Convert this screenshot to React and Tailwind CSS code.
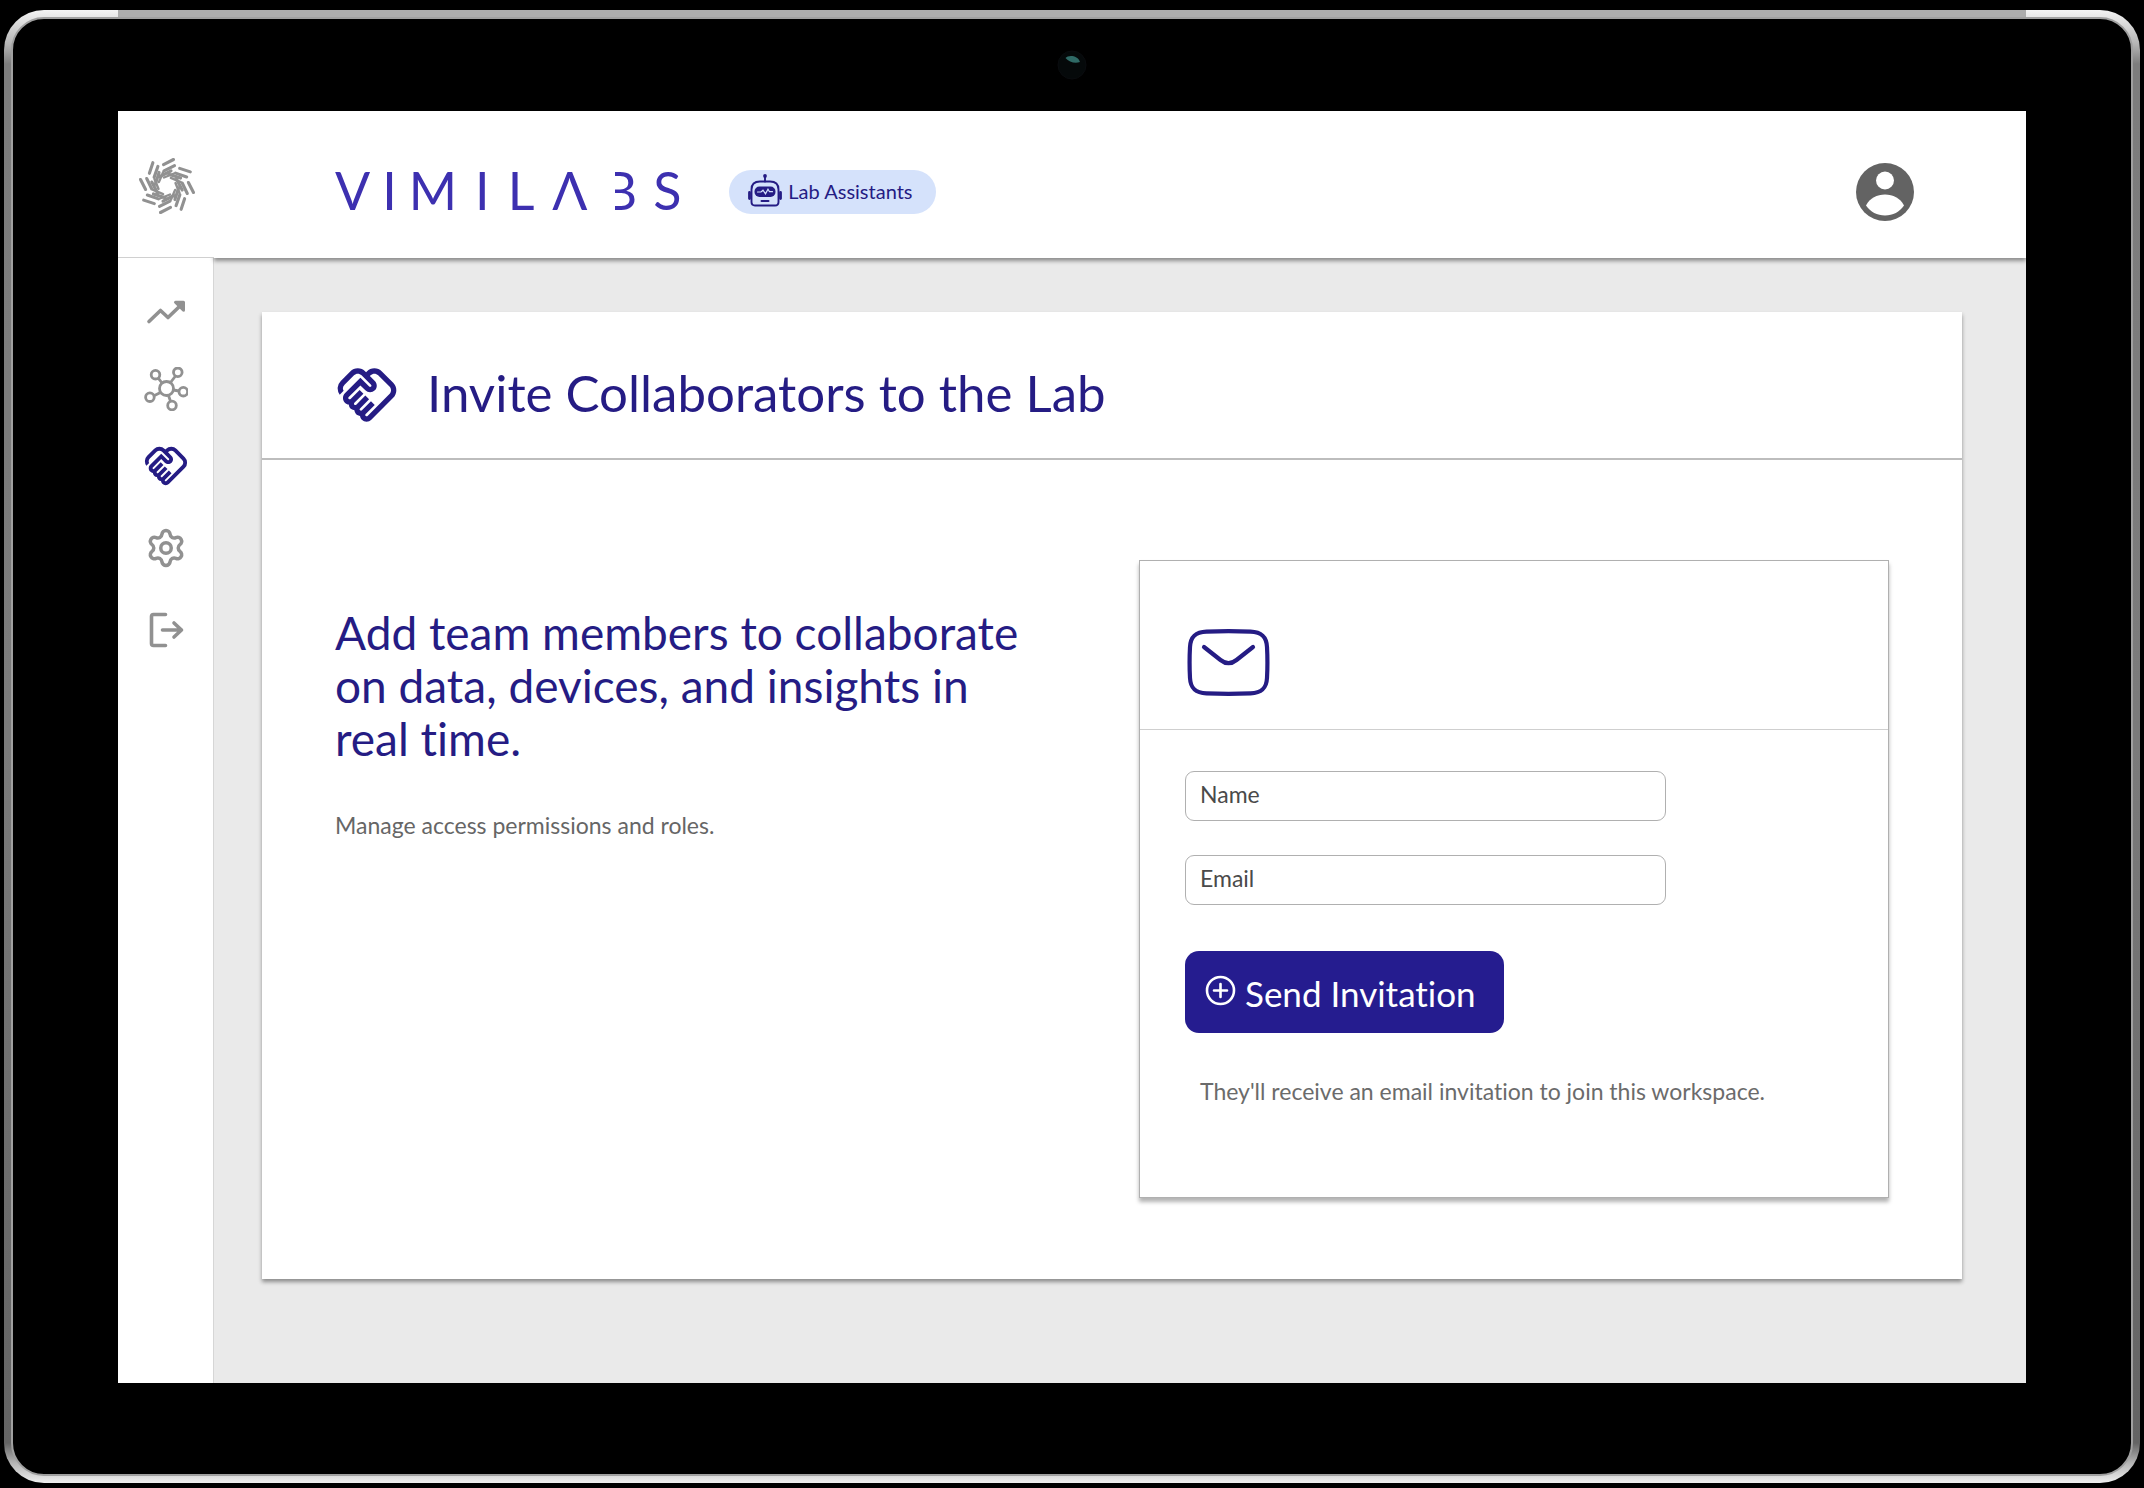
import React from "react";
import { MdOutlineHandshake } from "react-icons/md";
import { Settings } from "lucide-react";

function BurstLogo() {
  return (
    <svg viewBox="-30 -30 60 60" className="size-[60px]" fill="none" stroke="#919191" strokeWidth="3.1" strokeLinecap="round" aria-hidden="true">
      {[0, 45, 90, 135, 180, 225, 270, 315].map((a) => (
        <g key={a} transform={`rotate(${a})`}>
          <path d="M-3.500 -21.400L6.500 -26.500" />
          <path d="M-3 -15.200L7.500 -20.300" />
          <path d="M-7 -9.500L4 -15.200" />
          <path d="M-3 -8.500L7 -12.500" strokeWidth="2.400" />
        </g>
      ))}
    </svg>
  );
}

function TrendIcon() {
  return (
    <svg viewBox="0 0 44 44" className="size-11" fill="none" stroke="#919191" strokeWidth="3.6" strokeLinecap="round" strokeLinejoin="round" aria-hidden="true">
      <path d="M5 31.5L16.500 20.5L24 27.5L36.500 15.5" />
      <path d="M31.500 12.2H39.500V20.3Z" fill="#919191" strokeWidth="3" />
    </svg>
  );
}

function HubIcon() {
  return (
    <svg viewBox="0 0 44 44" className="size-11" fill="none" stroke="#919191" strokeWidth="2.8" aria-hidden="true">
      <circle cx="22.500" cy="21.500" r="7" />
      <circle cx="11.500" cy="7.700" r="4.300" />
      <circle cx="33.800" cy="5.300" r="4.300" />
      <circle cx="39.300" cy="24.700" r="4.300" />
      <circle cx="28" cy="38.500" r="4.300" />
      <circle cx="5.900" cy="30.200" r="4.300" />
      <path d="M14.300 11.200L18 16M31.500 9L26.500 15.500M29.500 23L35 24M24.500 28.500L26.500 34.300M10 28.800L16 25.800" />
    </svg>
  );
}

function LogoutIcon() {
  return (
    <svg viewBox="0 0 44 44" className="size-11" fill="none" stroke="#919191" strokeWidth="3.6" strokeLinecap="round" strokeLinejoin="round" aria-hidden="true">
      <path d="M21.500 6.500H9.500C8.200 6.500 7.500 7.200 7.500 8.500V35.500C7.500 36.800 8.200 37.500 9.500 37.500H21.500" />
      <path d="M18.500 22H37.500M30 15L37.500 22L30 29" />
    </svg>
  );
}

function RobotIcon() {
  return (
    <svg viewBox="0 0 34 34" className="size-[34px]" fill="none" stroke="#251c84" strokeWidth="1.9" strokeLinecap="round" aria-hidden="true">
      <circle cx="17" cy="2" r="1.900" fill="#251c84" stroke="none" />
      <path d="M17 2V7.500" />
      <path d="M12 7.500H22C27.500 7.500 30.500 10.500 30.500 15.500V28C30.500 30.500 29.500 31.500 27 31.500H7C4.500 31.500 3.500 30.500 3.500 28V15.500C3.500 10.500 6.500 7.500 12 7.500Z" />
      <path d="M1.500 18.500V24.500M32.500 18.500V24.500" strokeWidth="2.800" />
      <rect x="6.500" y="12.500" width="21" height="10.500" rx="5" fill="#251c84" stroke="none" />
      <path d="M9.500 18H13L15 16.200L17.500 19.800L20 15.300L21.500 17.700H24.500" stroke="#d5e2fb" strokeWidth="1.200" />
      <path d="M13.500 27H20.500" strokeWidth="2" />
    </svg>
  );
}

function AvatarIcon() {
  return (
    <svg viewBox="0 0 58 58" className="size-[58px]" aria-hidden="true">
      <circle cx="29" cy="29" r="29" fill="#636363" />
      <circle cx="29" cy="17.500" r="9" fill="#fff" />
      <path d="M10 42.500C14 35 21 31.500 29 31.500S44 35 48 42.500C43.500 49 37 52.500 29 52.500S14.500 49 10 42.500Z" fill="#fff" />
    </svg>
  );
}

function EnvelopeIcon() {
  return (
    <svg viewBox="0 0 88 67" className="h-[67px] w-[88px]" fill="none" stroke="#251c84" strokeWidth="4.2" strokeLinecap="round" aria-hidden="true">
      <path d="M21.500 2.600C36 2 51 2 65.500 2.600C77 3 81.500 8 82 18C82.600 29 82.600 38 82 49C81.500 59 77 64 65.500 64.400C51 65 36 65 21.500 64.400C10 64 5.500 59 5 49C4.400 38 4.400 29 5 18C5.500 8 10 3 21.500 2.600Z" />
      <path d="M19 18L35.500 31C41 35.400 46 35.400 51.500 31L68 18" />
    </svg>
  );
}

function PlusCircleIcon() {
  return (
    <svg viewBox="0 0 32 32" className="mb-1 size-8" fill="none" stroke="#fff" strokeWidth="2.600" strokeLinecap="round" aria-hidden="true">
      <circle cx="15.500" cy="15.500" r="13.500" />
      <path d="M15.500 9V22M9 15.500H22" />
    </svg>
  );
}

function Wordmark() {
  return (
    <p className="flex gap-[18px] pb-1 text-[52px] leading-[60px] text-[#3d30b0]" aria-label="VIMILABS">
      <span className="flex gap-3">
        <span>V</span>
        <span>I</span>
        <span>M</span>
      </span>
      <span>I</span>
      <span>L</span>
      <span className="flex gap-4">
        <span>Λ</span>
        <span className="bg-[linear-gradient(to_right,transparent_11px,#3d30b0_11px)] bg-clip-text text-transparent">B</span>
        <span>S</span>
      </span>
    </p>
  );
}

function NavButton({ label, children }) {
  return (
    <button type="button" aria-label={label} className="flex size-11 items-center justify-center">
      {children}
    </button>
  );
}

function Field({ label, type, className }) {
  return (
    <input
      type={type}
      aria-label={label}
      placeholder={label}
      className={`block h-[50px] w-[481px] max-w-full rounded-[9px] border border-[#b0b0b0] bg-white px-[14px] pb-1 text-[23px] text-[#4a4a4a] placeholder:text-[#4a4a4a] placeholder:opacity-100 ${className}`}
    />
  );
}

export default function App() {
  return (
    <div className="flex min-h-screen flex-col bg-black px-1 pt-[10px] pb-[5px] font-['Lato',sans-serif] [font-variant-ligatures:none]">
      <div className="flex flex-1 flex-col rounded-[40px] bg-[linear-gradient(to_right,transparent_114px,#adadad_114px,#adadad_calc(100%-114px),transparent_calc(100%-114px)),linear-gradient(to_bottom,#f4f4f4_0,#dedede_12px,#b5b5b5_34px,#7d7d7d_54px,#7b7b7b_50%,#646464_calc(100%-40px),#b5b5b5_calc(100%-20px),#f0f0f0_100%)] bg-[length:100%_9px,100%_100%] bg-no-repeat p-[7px]">
        <div className="flex flex-1 flex-col rounded-[33px] border-2 border-[#a0a0a0] bg-black px-[105px] pb-[91px]">
          <div className="flex h-[92px] items-center justify-center">
            <svg viewBox="0 0 30 30" className="size-[30px]" aria-hidden="true">
              <circle cx="15" cy="15" r="14" fill="#05090a" stroke="#0a0c0f" />
              <path d="M8.500 8C11 4.500 21 5 23 12C18 14 12 12 8.500 8Z" fill="#2f6a66" />
            </svg>
          </div>

          <div className="flex flex-1 flex-col bg-white">
            <header className="z-10 flex h-[147px] items-center">
              <div className="relative z-10 flex h-full w-24 shrink-0 items-center justify-center border-b border-[#d0d0d0] bg-white pt-1 pl-0.5">
                <BurstLogo />
              </div>
              <div className="flex h-full flex-1 items-center bg-white pt-3.5 pr-[112px] pl-[121px] shadow-[0_3px_4px_rgba(0,0,0,0.4)]">
                <Wordmark />
                <button type="button" className="ml-12 flex h-11 items-center gap-1.5 rounded-full bg-[#d5e2fb] pr-6 pb-px pl-[19px] text-xl text-[#251c84]">
                  <RobotIcon />
                  Lab Assistants
                </button>
                <button type="button" aria-label="Account" className="ml-auto">
                  <AvatarIcon />
                </button>
              </div>
            </header>

            <div className="flex flex-1">
              <aside className="flex w-24 shrink-0 flex-col items-center border-r border-[#d6d6d6] bg-white pt-8 pl-px">
                <nav className="flex flex-col gap-[38px]" aria-label="Main">
                  <div className="flex flex-col gap-[33px]">
                    <NavButton label="Trends"><TrendIcon /></NavButton>
                    <NavButton label="Network"><HubIcon /></NavButton>
                    <NavButton label="Collaborators"><MdOutlineHandshake className="size-[46px] shrink-0 text-[#251c84]" /></NavButton>
                  </div>
                  <NavButton label="Settings"><Settings className="size-[42px] text-[#919191]" /></NavButton>
                  <NavButton label="Log out"><LogoutIcon /></NavButton>
                </nav>
              </aside>

              <main className="flex flex-1 flex-col bg-[#eaeaea] pt-[54px] pr-16 pb-[104px] pl-12">
                <section className="flex flex-1 flex-col bg-white shadow-[0_3px_4px_rgba(0,0,0,0.4)]">
                  <div className="flex h-[148px] items-center gap-7 border-b-2 border-[#bdbdbd] px-[73px] pt-5">
                    <MdOutlineHandshake className="size-16 text-[#251c84]" />
                    <h1 className="pb-1 text-[51px] leading-[60px] text-[#251c84]">Invite Collaborators to the Lab</h1>
                  </div>

                  <div className="flex flex-1 items-start justify-between gap-12 px-[73px] pt-[100px] pb-20">
                    <div className="pt-[46px]">
                      <h2 className="max-w-[700px] text-[46px] leading-[53px] text-[#251c84]">
                        Add team members to collaborate on data, devices, and insights in real time.
                      </h2>
                      <p className="mt-[46px] text-[23px] leading-7 text-[#666]">Manage access permissions and roles.</p>
                    </div>

                    <form className="w-[750px] shrink-0 border border-[#b0b0b0] bg-white shadow-[0_4px_4px_rgba(0,0,0,0.3)]" onSubmit={(e) => e.preventDefault()}>
                      <div className="border-b border-[#cfcfcf] pt-[68px] pb-[33px] pl-[45px]">
                        <EnvelopeIcon />
                      </div>
                      <div className="px-[45px] pt-[41px] pb-[92px]">
                        <Field label="Name" type="text" className="mb-[34px]" />
                        <Field label="Email" type="email" className="mb-[46px]" />
                        <button type="submit" className="flex h-[82px] items-center gap-2 rounded-[14px] bg-[#251c8f] pt-0.5 pr-7 pl-5 text-[35px] text-white">
                          <PlusCircleIcon />
                          Send Invitation
                        </button>
                        <p className="mt-11 pl-[15px] text-[23px] leading-7 text-[#6b6b6b]">They'll receive an email invitation to join this workspace.</p>
                      </div>
                    </form>
                  </div>
                </section>
              </main>
            </div>
          </div>
        </div>
      </div>
    </div>
  );
}
